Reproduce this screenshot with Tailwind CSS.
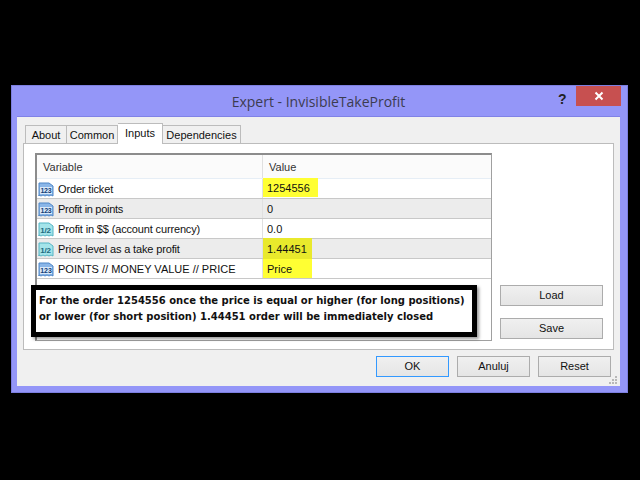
<!DOCTYPE html>
<html lang="en">
<head>
    <meta charset="UTF-8">
    <title>Expert - InvisibleTakeProfit</title>
    <script src="https://cdn.jsdelivr.net/npm/@tailwindcss/browser@4"></script>
</head>
<body class="bg-black w-[640px] h-[480px] overflow-hidden pt-[85px] pl-[11px] font-['Liberation_Sans',sans-serif] text-[11px] text-[#111]">
    <svg class="hidden">
        <symbol id="int" viewBox="0 0 16 16">
            <path d="M1 15V2h10l4 3v10l-2-1-2 1-2-1-2 1-2-1-2 1-2-1z" fill="#8ab6e8" stroke="#4f86c6"/>
            <rect x="2" y="6" width="12" height="7" fill="#d8e8f8"/>
            <text x="8" y="12.2" font-size="7" font-weight="700" text-anchor="middle" fill="#123e78" font-family="Liberation Sans">123</text>
        </symbol>
        <symbol id="real" viewBox="0 0 16 16">
            <path d="M1 15V2h10l4 3v10l-2-1-2 1-2-1-2 1-2-1-2 1-2-1z" fill="#a4e4ea" stroke="#55b4c4"/>
            <text x="7.5" y="12" font-size="8" font-weight="700" text-anchor="middle" fill="#1c6a80" font-family="Liberation Sans">1/2</text>
        </symbol>
    </svg>

    <!-- Window -->
    <div class="w-[617px] h-[308px] bg-[#9496f8] border border-[#7d7fe0] flex flex-col pl-[5px] pr-[7px] pb-[6px]">
        <div class="h-[30px] shrink-0 flex items-start relative">
            <div class="flex-1 text-center text-[14px] leading-[31px] text-[#3c3c50] font-['Open_Sans',sans-serif]">Expert - InvisibleTakeProfit</div>
            <span class="absolute left-[541px] top-[3px] text-[14px] font-bold text-[#222]">?</span>
            <div class="absolute -right-[1px] top-0 w-[45px] h-[20px] bg-[#c75050] flex items-center justify-center">
                <svg width="10" height="10" viewBox="0 0 10 10"><path d="M1.5 1.5l7 7M8.5 1.5l-7 7" stroke="#fff" stroke-width="2"/></svg>
            </div>
        </div>

        <!-- Client area -->
        <div class="flex-1 bg-[#f0f0f0] border-t border-[#8082e6] px-[6px] pt-[8px] flex flex-col relative">
            <div class="flex h-[18px] pl-[2px] items-end relative z-10">
                <div class="w-[42px] h-[18px] bg-[#f0f0f0] border border-b-0 border-[#bcbcbc] text-center leading-[19px]">About</div>
                <div class="w-[51px] h-[18px] bg-[#f0f0f0] border border-b-0 border-l-0 border-[#bcbcbc] text-center leading-[19px]">Common</div>
                <div class="w-[45px] h-[21px] -mb-[1px] bg-white border border-b-0 border-l-0 border-[#bcbcbc] text-center leading-[19px]">Inputs</div>
                <div class="w-[78px] h-[18px] bg-[#f0f0f0] border border-b-0 border-l-0 border-[#bcbcbc] text-center leading-[19px]">Dependencies</div>
            </div>

            <!-- Tab panel -->
            <div class="w-[591px] h-[207px] bg-white border border-[#bcbcbc] pl-[11px] pt-[9px] flex gap-[8px]">
                <div class="w-[457px] h-[188px] border border-[#a0a0a0] border-t-2 border-l-2 border-t-[#8c8c8c] border-l-[#8c8c8c]">
                    <div class="flex h-[24px] bg-[#fbfbfb] border-b border-[#e6eef6] leading-[24px] text-[#333]">
                        <div class="w-[226px] pl-[6px] border-r border-[#e0e0e0]">Variable</div>
                        <div class="pl-[6px]">Value</div>
                    </div>
                    <div class="flex h-[20px] bg-white border-b border-[#c8c8c8] leading-[20px]">
                        <div class="w-[226px] pl-[1px] flex items-center gap-[4px] border-r border-[#e0e0e0] tracking-[-0.15px]"><svg class="w-[16px] h-[16px]"><use href="#int"/></svg>Order ticket</div>
                        <div class="w-[55px] h-[19px] -mt-[1px] bg-[#ffff33] pl-[4px] leading-[20px]">1254556</div>
                    </div>
                    <div class="flex h-[20px] bg-[#ececec] border-b border-[#c8c8c8] leading-[20px]">
                        <div class="w-[226px] pl-[1px] flex items-center gap-[4px] border-r border-[#e0e0e0] tracking-[-0.3px]"><svg class="w-[16px] h-[16px]"><use href="#int"/></svg>Profit in points</div>
                        <div class="pl-[4px]">0</div>
                    </div>
                    <div class="flex h-[20px] bg-white border-b border-[#c8c8c8] leading-[20px]">
                        <div class="w-[226px] pl-[1px] flex items-center gap-[4px] border-r border-[#e0e0e0] tracking-[-0.15px]"><svg class="w-[16px] h-[16px]"><use href="#real"/></svg>Profit in $$ (account currency)</div>
                        <div class="pl-[4px]">0.0</div>
                    </div>
                    <div class="flex h-[20px] bg-[#ececec] border-b border-[#c8c8c8] leading-[20px]">
                        <div class="w-[226px] pl-[1px] flex items-center gap-[4px] border-r border-[#e0e0e0] tracking-[-0.15px]"><svg class="w-[16px] h-[16px]"><use href="#real"/></svg>Price level as a take profit</div>
                        <div class="w-[49px] h-[21px] -mt-[1px] bg-[#e9e92c] pl-[4px] leading-[22px]">1.44451</div>
                    </div>
                    <div class="flex h-[20px] bg-white border-b border-[#c8c8c8] leading-[20px]">
                        <div class="w-[226px] pl-[1px] flex items-center gap-[4px] border-r border-[#e0e0e0]"><svg class="w-[16px] h-[16px]"><use href="#int"/></svg>POINTS // MONEY VALUE // PRICE</div>
                        <div class="w-[49px] bg-[#ffff33] pl-[4px]">Price</div>
                    </div>
                </div>
                <div class="flex flex-col gap-[12px] pt-[132px]">
                    <button class="w-[103px] h-[21px] bg-linear-to-b from-[#f0f0f0] to-[#e5e5e5] border border-[#acacac]">Load</button>
                    <button class="w-[103px] h-[21px] bg-linear-to-b from-[#f0f0f0] to-[#e5e5e5] border border-[#acacac]">Save</button>
                </div>
            </div>

            <!-- Bottom buttons -->
            <div class="flex justify-end gap-[8px] mt-[6px] pr-[3px]">
                <button class="w-[73px] h-[21px] bg-linear-to-b from-[#f0f0f0] to-[#e5e5e5] border border-[#3399ff]">OK</button>
                <button class="w-[73px] h-[21px] bg-linear-to-b from-[#f0f0f0] to-[#e5e5e5] border border-[#acacac]">Anuluj</button>
                <button class="w-[73px] h-[21px] bg-linear-to-b from-[#f0f0f0] to-[#e5e5e5] border border-[#acacac]">Reset</button>
            </div>

            <!-- Size grip -->
            <svg class="absolute right-[3px] bottom-[2px]" width="8" height="8" viewBox="0 0 8 8" fill="#b8b8b8">
                <rect x="6" y="0" width="2" height="2"/><rect x="3" y="3" width="2" height="2"/><rect x="6" y="3" width="2" height="2"/><rect x="0" y="6" width="2" height="2"/><rect x="3" y="6" width="2" height="2"/><rect x="6" y="6" width="2" height="2"/>
            </svg>

            <!-- Callout drawn over the table -->
            <div class="absolute left-[14px] top-[168px] w-[446px] h-[52px] bg-white border-[5px] border-black shadow-[2px_2px_3px_rgba(0,0,0,0.4)] pl-[3px] pt-[3px] font-['DejaVu_Sans',sans-serif] font-bold text-[10px] leading-[16px] text-[#111] whitespace-nowrap">
                For the order 1254556 once the price is equal or higher (for long positions)<br>or lower (for short position) 1.44451 order will be immediately closed
            </div>
        </div>
    </div>
</body>
</html>
